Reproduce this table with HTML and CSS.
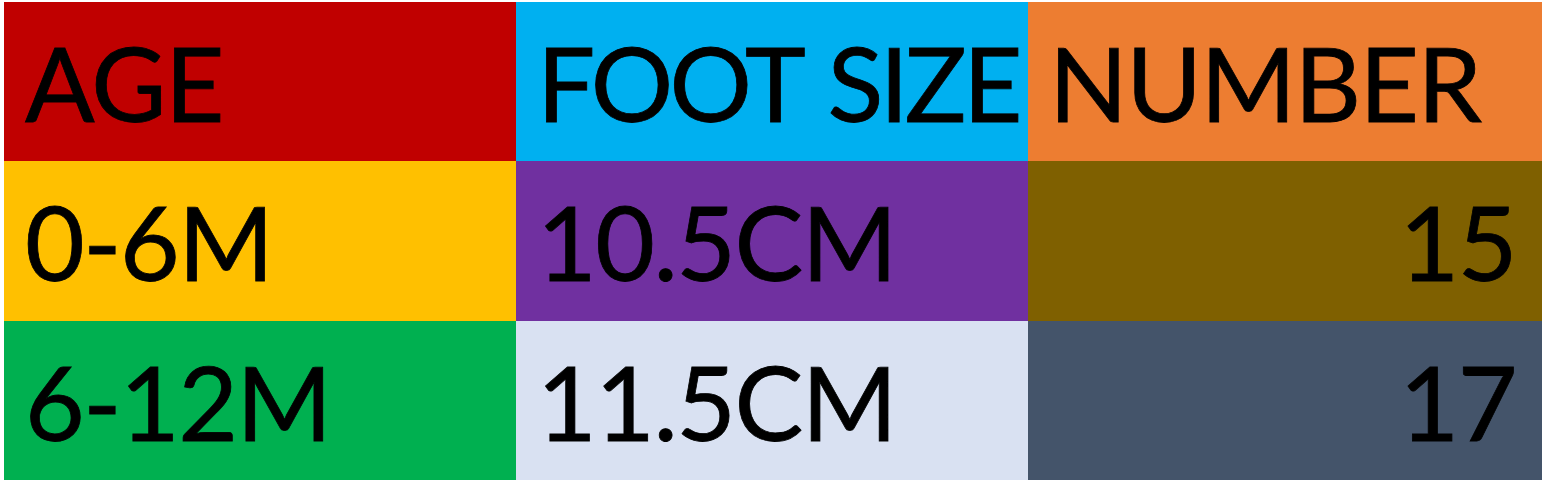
FILE: index.html
```html
<!DOCTYPE html>
<html>
<head>
<meta charset="utf-8">
<link rel="stylesheet" href="styles.css">
</head>
<body>
<div class="sheet">
  <div class="cell c-red">AGE</div>
  <div class="cell c-blue tight">FOOT SIZE</div>
  <div class="cell c-orange">NUMBER</div>
  <div class="cell c-yellow">0-6M</div>
  <div class="cell c-purple">10.5CM</div>
  <div class="cell c-brown num">15</div>
  <div class="cell c-green">6-12M</div>
  <div class="cell c-light">11.5CM</div>
  <div class="cell c-slate num">17</div>
</div>
</body>
</html>
```
FILE: styles.css
```css
html, body {
  margin: 0;
  background: #ffffff;
  overflow: hidden;
}
.sheet {
  display: grid;
  grid-template-columns: 512px 512px 514px;
  grid-template-rows: 159px 160px 160px;
  padding: 2px 0 0 4px;
  font-family: Lato, "Open Sans", sans-serif;
  font-size: 103px;
  letter-spacing: -1.5px;
  -webkit-text-stroke: 0.8px #000000;
  color: #000000;
}
.cell {
  padding: 0 24px 0 21px;
  line-height: 160px;
  white-space: nowrap;
  min-width: 0;
}
.tight {
  letter-spacing: -3.75px;
  word-spacing: 6px;
}
.num { text-align: right; padding-right: 26px; }
.c-red { background: #C00000; }
.c-blue { background: #00B0F0; }
.c-orange { background: #ED7D31; }
.c-yellow { background: #FFC000; }
.c-purple { background: #7030A0; }
.c-brown { background: #7F6000; }
.c-green { background: #00B050; }
.c-light { background: #D9E1F2; }
.c-slate { background: #44546A; }
```
